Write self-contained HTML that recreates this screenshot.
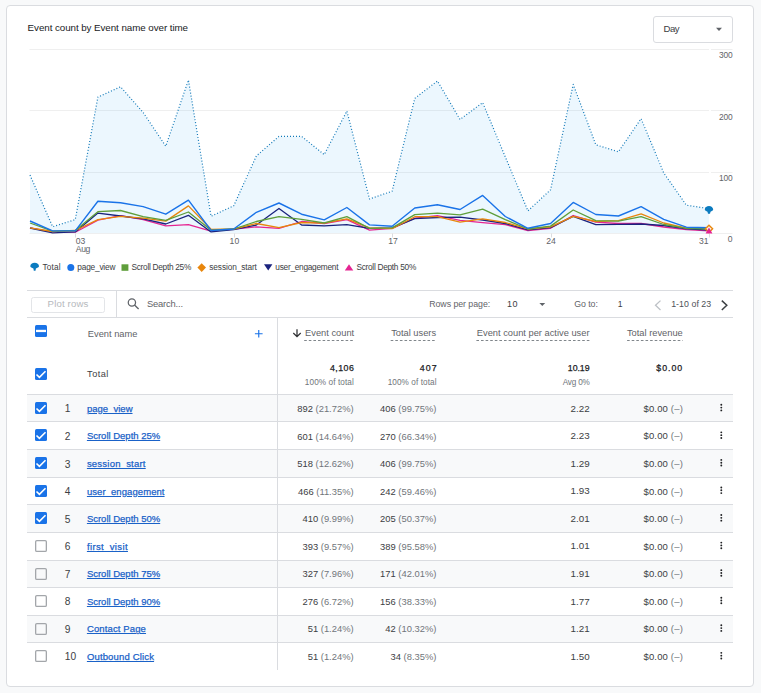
<!DOCTYPE html><html><head><meta charset="utf-8"><style>
html,body{margin:0;padding:0;}
body{width:761px;height:693px;background:#f8f9fa;position:relative;overflow:hidden;font-family:"Liberation Sans", sans-serif;}
.t{position:absolute;white-space:nowrap;}
.card{position:absolute;left:6px;top:5px;width:746px;height:680px;border:1px solid #dadce0;border-radius:4px;background:#fff;}
.abs{position:absolute;}
svg{position:absolute;left:0;top:0;}
</style></head><body>
<div class="card"></div>
<div class="t" style="left:27.60px;top:21.92px;font-size:9.8px;line-height:11.76px;color:#202124;font-weight:normal;letter-spacing:-0.070px;">Event count by Event name over time</div>
<div class="abs" style="left:653px;top:16px;width:78px;height:25px;border:1px solid #dadce0;border-radius:3px;"></div>
<div class="t" style="left:663.60px;top:23.11px;font-size:9.6px;line-height:11.52px;color:#3c4043;font-weight:normal;letter-spacing:-0.536px;">Day</div>
<svg width="761" height="693" style="pointer-events:none"><path d="M716 27.7 L722 27.7 L719 30.9 Z" fill="#606368"/></svg>
<svg width="761" height="693">
<line x1="29.5" y1="49.5" x2="709" y2="49.5" stroke="#efefef" stroke-width="1"/>
<line x1="711" y1="49.5" x2="732.5" y2="49.5" stroke="#efefef" stroke-width="1"/>
<line x1="29.5" y1="110.5" x2="709" y2="110.5" stroke="#efefef" stroke-width="1"/>
<line x1="711" y1="110.5" x2="732.5" y2="110.5" stroke="#efefef" stroke-width="1"/>
<line x1="29.5" y1="172.5" x2="709" y2="172.5" stroke="#efefef" stroke-width="1"/>
<line x1="711" y1="172.5" x2="732.5" y2="172.5" stroke="#efefef" stroke-width="1"/>
<line x1="29.5" y1="233.5" x2="709" y2="233.5" stroke="#eeeff0" stroke-width="1"/>
<line x1="711" y1="233.5" x2="732.5" y2="233.5" stroke="#efefef" stroke-width="1"/>
<polygon points="30,233 30.00,175.1 52.63,226.7 75.27,219.6 97.90,97.1 120.53,86.7 143.17,112.5 165.80,146.2 188.43,80.1 211.07,216.3 233.70,205.8 256.33,156 278.97,136.4 301.60,136.4 324.23,154.6 346.87,111.1 369.50,199 392.13,191.2 414.77,98.4 437.40,81 460.03,119.5 482.67,102.6 505.30,156.9 527.93,210.9 550.57,189.8 573.20,84.4 595.83,144.8 618.47,151.8 641.10,118.7 663.73,172.9 686.37,205.2 709.00,208.6 709,233" fill="rgb(10,150,240)" fill-opacity="0.08"/>
<polyline points="30.00,227.9 52.63,231.9 75.27,232.2 97.90,220.1 120.53,215.7 143.17,219.6 165.80,225.8 188.43,224.7 211.07,231.2 233.70,229.2 256.33,226.9 278.97,228.3 301.60,221.5 324.23,223.5 346.87,219.6 369.50,230.2 392.13,228.3 414.77,218.2 437.40,215.7 460.03,220.4 482.67,222.6 505.30,224.7 527.93,230.5 550.57,228.3 573.20,215.5 595.83,222.1 618.47,223.5 641.10,223.5 663.73,227 686.37,229.6 709.00,230.8" fill="none" stroke="#e52592" stroke-width="1.3" stroke-linejoin="round"/>
<polyline points="30.00,228 52.63,232.9 75.27,231.9 97.90,213.1 120.53,216 143.17,218.9 165.80,224 188.43,215.3 211.07,231.9 233.70,229.5 256.33,225 278.97,208.5 301.60,225 324.23,225.8 346.87,224.7 369.50,228.3 392.13,227.9 414.77,218.6 437.40,217.5 460.03,217.2 482.67,220 505.30,223.5 527.93,229.8 550.57,227.6 573.20,216.3 595.83,224.7 618.47,224.4 641.10,224 663.73,225.5 686.37,228.8 709.00,230.2" fill="none" stroke="#1a237e" stroke-width="1.3" stroke-linejoin="round"/>
<polyline points="30.00,227.9 52.63,231.5 75.27,230.5 97.90,219.6 120.53,216.3 143.17,218.2 165.80,221.1 188.43,205.9 211.07,229.3 233.70,229 256.33,223.5 278.97,227.6 301.60,222.5 324.23,223.2 346.87,218.9 369.50,227.9 392.13,228.7 414.77,216.7 437.40,216.7 460.03,222.1 482.67,218.8 505.30,222.5 527.93,229 550.57,226.9 573.20,216.3 595.83,221.5 618.47,220.6 641.10,213.9 663.73,223 686.37,228.1 709.00,228.4" fill="none" stroke="#e8860c" stroke-width="1.3" stroke-linejoin="round"/>
<polyline points="30.00,223 52.63,231.2 75.27,230.5 97.90,211.7 120.53,210.5 143.17,216.7 165.80,220.4 188.43,212 211.07,230.2 233.70,229 256.33,221.5 278.97,216.7 301.60,219.3 324.23,223 346.87,216.7 369.50,228.3 392.13,227.9 414.77,214.6 437.40,213.1 460.03,214.9 482.67,209.1 505.30,219.6 527.93,229 550.57,226.1 573.20,210 595.83,220.6 618.47,221.1 641.10,216.7 663.73,224.5 686.37,228.4 709.00,229" fill="none" stroke="#5f9e3b" stroke-width="1.3" stroke-linejoin="round"/>
<polyline points="30.00,221 52.63,230.9 75.27,230.9 97.90,201.3 120.53,202.7 143.17,206.6 165.80,214.2 188.43,200.2 211.07,230.5 233.70,229 256.33,212.3 278.97,203 301.60,214.2 324.23,219.9 346.87,207.5 369.50,224.9 392.13,226.3 414.77,208 437.40,204.7 460.03,209.5 482.67,195.4 505.30,216.5 527.93,228.3 550.57,223.5 573.20,202.4 595.83,214.5 618.47,216 641.10,206.7 663.73,219.3 686.37,227.2 709.00,227.7" fill="none" stroke="#1a73e8" stroke-width="1.4" stroke-linejoin="round"/>
<polyline points="30.00,175.1 52.63,226.7 75.27,219.6 97.90,97.1 120.53,86.7 143.17,112.5 165.80,146.2 188.43,80.1 211.07,216.3 233.70,205.8 256.33,156 278.97,136.4 301.60,136.4 324.23,154.6 346.87,111.1 369.50,199 392.13,191.2 414.77,98.4 437.40,81 460.03,119.5 482.67,102.6 505.30,156.9 527.93,210.9 550.57,189.8 573.20,84.4 595.83,144.8 618.47,151.8 641.10,118.7 663.73,172.9 686.37,205.2 709.00,208.6" fill="none" stroke="#1279b8" stroke-width="1.2" stroke-linejoin="round" stroke-dasharray="1 2"/>
<line x1="75.5" y1="233.5" x2="75.5" y2="237.5" stroke="#dadce0" stroke-width="1"/>
<line x1="234.5" y1="233.5" x2="234.5" y2="237.5" stroke="#dadce0" stroke-width="1"/>
<line x1="392.5" y1="233.5" x2="392.5" y2="237.5" stroke="#dadce0" stroke-width="1"/>
<line x1="551.5" y1="233.5" x2="551.5" y2="237.5" stroke="#dadce0" stroke-width="1"/>
<line x1="709.5" y1="233.5" x2="709.5" y2="237.5" stroke="#dadce0" stroke-width="1"/>
<path d="M704.8 209.6 C704.8 207.5 706.8 206 709 206 C711.2 206 713.2 207.5 713.2 209.6 C713.2 210.9 711.7 211.2 710.5 211.8 L710 213.8 L708 213.8 L707.5 211.8 C706.3 211.2 704.8 210.9 704.8 209.6 Z" fill="#0c7bbf"/>
<path d="M709 225.2 L712.6 228.8 L709 232.4 L705.4 228.8 Z" fill="#fdf3e6" stroke="#e8860c" stroke-width="1.4"/>
<path d="M709 227.6 L712.4 233.4 L705.6 233.4 Z" fill="#e52592"/>
</svg>
<div class="t" style="left:332.39px;width:400px;text-align:right;top:50.45px;font-size:8.4px;line-height:10.08px;color:#5f6368;font-weight:normal;letter-spacing:-0.208px;">300</div>
<div class="t" style="left:332.39px;width:400px;text-align:right;top:111.65px;font-size:8.4px;line-height:10.08px;color:#5f6368;font-weight:normal;letter-spacing:-0.208px;">200</div>
<div class="t" style="left:332.39px;width:400px;text-align:right;top:173.45px;font-size:8.4px;line-height:10.08px;color:#5f6368;font-weight:normal;letter-spacing:-0.208px;">100</div>
<div class="t" style="left:332.60px;width:400px;text-align:right;top:234.06px;font-size:8.6px;line-height:10.32px;color:#5f6368;font-weight:normal;">0</div>
<div class="t" style="left:75.80px;top:236.06px;font-size:8.6px;line-height:10.32px;color:#5f6368;font-weight:normal;">03</div>
<div class="t" style="left:75.80px;top:244.06px;font-size:8.6px;line-height:10.32px;color:#5f6368;font-weight:normal;letter-spacing:-0.351px;">Aug</div>
<div class="t" style="left:34.40px;width:400px;text-align:center;top:236.06px;font-size:8.6px;line-height:10.32px;color:#5f6368;font-weight:normal;">10</div>
<div class="t" style="left:193.00px;width:400px;text-align:center;top:236.06px;font-size:8.6px;line-height:10.32px;color:#5f6368;font-weight:normal;">17</div>
<div class="t" style="left:351.00px;width:400px;text-align:center;top:236.06px;font-size:8.6px;line-height:10.32px;color:#5f6368;font-weight:normal;">24</div>
<div class="t" style="left:308.60px;width:400px;text-align:right;top:236.06px;font-size:8.6px;line-height:10.32px;color:#5f6368;font-weight:normal;">31</div>
<svg width="761" height="693">
<path d="M30.3 266.2 C30.3 264 32.2 262.7 34.65 262.7 C37.1 262.7 39 264 39 266.2 C39 267.4 37.3 267.9 35.9 268.4 L35.5 270.7 L33.8 270.7 L33.4 268.4 C32 267.9 30.3 267.4 30.3 266.2 Z" fill="#0c7bbf"/>
<circle cx="70.8" cy="267.6" r="3.5" fill="#1a73e8"/>
<rect x="121.5" y="264.3" width="6.9" height="6.5" fill="#5f9e3b"/>
<path d="M201.7 263.3 L206 267.6 L201.7 271.9 L197.4 267.6 Z" fill="#e8860c"/>
<path d="M264 264.3 L272.4 264.3 L268.2 270.4 Z" fill="#1a237e"/>
<path d="M349 264.3 L353.3 270.6 L344.8 270.6 Z" fill="#e52592"/>
</svg>
<div class="t" style="left:42.50px;top:262.54px;font-size:8.3px;line-height:9.96px;color:#3c4043;font-weight:normal;letter-spacing:0.167px;">Total</div>
<div class="t" style="left:77.30px;top:262.54px;font-size:8.3px;line-height:9.96px;color:#3c4043;font-weight:normal;letter-spacing:-0.198px;">page_view</div>
<div class="t" style="left:131.50px;top:262.54px;font-size:8.3px;line-height:9.96px;color:#3c4043;font-weight:normal;letter-spacing:-0.289px;">Scroll Depth 25%</div>
<div class="t" style="left:209.30px;top:262.54px;font-size:8.3px;line-height:9.96px;color:#3c4043;font-weight:normal;letter-spacing:-0.109px;">session_start</div>
<div class="t" style="left:275.30px;top:262.54px;font-size:8.3px;line-height:9.96px;color:#3c4043;font-weight:normal;letter-spacing:-0.265px;">user_engagement</div>
<div class="t" style="left:356.40px;top:262.54px;font-size:8.3px;line-height:9.96px;color:#3c4043;font-weight:normal;letter-spacing:-0.282px;">Scroll Depth 50%</div>
<svg width="761" height="693">
<line x1="27" y1="290.5" x2="733" y2="290.5" stroke="#dadce0"/>
<line x1="27" y1="317.5" x2="733" y2="317.5" stroke="#dadce0"/>
<line x1="116.5" y1="291" x2="116.5" y2="317" stroke="#dadce0"/>
<rect x="31.5" y="297.5" width="73" height="15" rx="2" fill="none" stroke="#e3e5e8"/>
<circle cx="131.9" cy="302.4" r="3.65" fill="none" stroke="#5f6368" stroke-width="1.25"/>
<line x1="134.5" y1="305" x2="138.6" y2="309" stroke="#5f6368" stroke-width="1.35"/>
<path d="M539.4 303 L545.2 303 L542.3 305.9 Z" fill="#5f6368"/>
<path d="M660.5 300.6 L655.5 305.3 L660.5 310" fill="none" stroke="#bdc1c6" stroke-width="1.3"/>
<path d="M721.8 300.6 L726.8 305.3 L721.8 310" fill="none" stroke="#3c4043" stroke-width="1.5"/>
</svg>
<div class="t" style="left:47.60px;top:298.11px;font-size:9.6px;line-height:11.52px;color:#b6b9bd;font-weight:normal;letter-spacing:0.165px;">Plot rows</div>
<div class="t" style="left:146.90px;top:298.30px;font-size:9.4px;line-height:11.28px;color:#5f6368;font-weight:normal;letter-spacing:-0.177px;">Search...</div>
<div class="t" style="left:429.20px;top:298.97px;font-size:8.8px;line-height:10.56px;color:#5f6368;font-weight:normal;letter-spacing:-0.049px;">Rows per page:</div>
<div class="t" style="left:507.00px;top:298.78px;font-size:9.0px;line-height:10.80px;color:#3c4043;font-weight:normal;letter-spacing:0.489px;">10</div>
<div class="t" style="left:574.20px;top:298.97px;font-size:8.8px;line-height:10.56px;color:#5f6368;font-weight:normal;letter-spacing:-0.054px;">Go to:</div>
<div class="t" style="left:617.80px;top:299.16px;font-size:8.6px;line-height:10.32px;color:#3c4043;font-weight:normal;">1</div>
<div class="t" style="left:671.20px;top:298.97px;font-size:8.8px;line-height:10.56px;color:#4d5156;font-weight:normal;letter-spacing:0.041px;">1-10 of 23</div>
<svg width="761" height="693">
<rect x="27" y="394" width="706" height="27" fill="#f8f9fa"/>
<rect x="27" y="449" width="706" height="28" fill="#f8f9fa"/>
<rect x="27" y="504" width="706" height="28" fill="#f8f9fa"/>
<rect x="27" y="560" width="706" height="27" fill="#f8f9fa"/>
<rect x="27" y="615" width="706" height="27" fill="#f8f9fa"/>
<line x1="27" y1="394.5" x2="733" y2="394.5" stroke="#dadce0"/>
<line x1="27" y1="421.5" x2="733" y2="421.5" stroke="#dadce0"/>
<line x1="27" y1="449.5" x2="733" y2="449.5" stroke="#dadce0"/>
<line x1="27" y1="477.5" x2="733" y2="477.5" stroke="#dadce0"/>
<line x1="27" y1="504.5" x2="733" y2="504.5" stroke="#dadce0"/>
<line x1="27" y1="532.5" x2="733" y2="532.5" stroke="#dadce0"/>
<line x1="27" y1="560.5" x2="733" y2="560.5" stroke="#dadce0"/>
<line x1="27" y1="587.5" x2="733" y2="587.5" stroke="#dadce0"/>
<line x1="27" y1="615.5" x2="733" y2="615.5" stroke="#dadce0"/>
<line x1="27" y1="642.5" x2="733" y2="642.5" stroke="#dadce0"/>
<line x1="277.5" y1="318" x2="277.5" y2="670" stroke="#dadce0"/>
<rect x="35" y="325" width="12" height="12" rx="1.5" fill="#1a73e8"/>
<rect x="36" y="329.8" width="10" height="2.3" fill="#fff"/>
<rect x="35" y="368" width="12" height="12" rx="1.5" fill="#1a73e8"/>
<path d="M36.5 374.5 L39.4 377.3 L45.5 371.2" fill="none" stroke="#fff" stroke-width="1.6"/>
<path d="M258.75 329.9 V337.6 M254.9 333.75 H262.6" stroke="#1a73e8" stroke-width="1.15"/>
<path d="M297 329.3 V336.4 M293.3 333 L297 336.7 L300.7 333" fill="none" stroke="#303134" stroke-width="1.25"/>
<line x1="304.2" y1="340.5" x2="353.5" y2="340.5" stroke="#80868b" stroke-width="1" stroke-dasharray="2.6 2"/>
<line x1="390.7" y1="340.5" x2="436.1" y2="340.5" stroke="#80868b" stroke-width="1" stroke-dasharray="2.6 2"/>
<line x1="476.4" y1="340.5" x2="589.5" y2="340.5" stroke="#80868b" stroke-width="1" stroke-dasharray="2.6 2"/>
<line x1="627.1" y1="340.5" x2="682.8" y2="340.5" stroke="#80868b" stroke-width="1" stroke-dasharray="2.6 2"/>
<rect x="35" y="402" width="12" height="12" rx="1.5" fill="#1a73e8"/>
<path d="M36.5 408.5 L39.4 411.3 L45.5 405.2" fill="none" stroke="#fff" stroke-width="1.6"/>
<circle cx="721.3" cy="404.80" r="0.95" fill="#202124"/>
<circle cx="721.3" cy="407.60" r="0.95" fill="#202124"/>
<circle cx="721.3" cy="410.40" r="0.95" fill="#202124"/>
<rect x="35" y="429" width="12" height="12" rx="1.5" fill="#1a73e8"/>
<path d="M36.5 435.5 L39.4 438.3 L45.5 432.2" fill="none" stroke="#fff" stroke-width="1.6"/>
<circle cx="721.3" cy="432.36" r="0.95" fill="#202124"/>
<circle cx="721.3" cy="435.16" r="0.95" fill="#202124"/>
<circle cx="721.3" cy="437.96" r="0.95" fill="#202124"/>
<rect x="35" y="457" width="12" height="12" rx="1.5" fill="#1a73e8"/>
<path d="M36.5 463.5 L39.4 466.3 L45.5 460.2" fill="none" stroke="#fff" stroke-width="1.6"/>
<circle cx="721.3" cy="459.92" r="0.95" fill="#202124"/>
<circle cx="721.3" cy="462.72" r="0.95" fill="#202124"/>
<circle cx="721.3" cy="465.52" r="0.95" fill="#202124"/>
<rect x="35" y="485" width="12" height="12" rx="1.5" fill="#1a73e8"/>
<path d="M36.5 491.5 L39.4 494.3 L45.5 488.2" fill="none" stroke="#fff" stroke-width="1.6"/>
<circle cx="721.3" cy="487.48" r="0.95" fill="#202124"/>
<circle cx="721.3" cy="490.28" r="0.95" fill="#202124"/>
<circle cx="721.3" cy="493.08" r="0.95" fill="#202124"/>
<rect x="35" y="512" width="12" height="12" rx="1.5" fill="#1a73e8"/>
<path d="M36.5 518.5 L39.4 521.3 L45.5 515.2" fill="none" stroke="#fff" stroke-width="1.6"/>
<circle cx="721.3" cy="515.04" r="0.95" fill="#202124"/>
<circle cx="721.3" cy="517.84" r="0.95" fill="#202124"/>
<circle cx="721.3" cy="520.64" r="0.95" fill="#202124"/>
<rect x="35.65" y="540.65" width="10.7" height="10.7" rx="1.2" fill="none" stroke="#a3a6aa" stroke-width="1.3"/>
<circle cx="721.3" cy="542.60" r="0.95" fill="#202124"/>
<circle cx="721.3" cy="545.40" r="0.95" fill="#202124"/>
<circle cx="721.3" cy="548.20" r="0.95" fill="#202124"/>
<rect x="35.65" y="568.65" width="10.7" height="10.7" rx="1.2" fill="none" stroke="#a3a6aa" stroke-width="1.3"/>
<circle cx="721.3" cy="570.16" r="0.95" fill="#202124"/>
<circle cx="721.3" cy="572.96" r="0.95" fill="#202124"/>
<circle cx="721.3" cy="575.76" r="0.95" fill="#202124"/>
<rect x="35.65" y="595.65" width="10.7" height="10.7" rx="1.2" fill="none" stroke="#a3a6aa" stroke-width="1.3"/>
<circle cx="721.3" cy="597.72" r="0.95" fill="#202124"/>
<circle cx="721.3" cy="600.52" r="0.95" fill="#202124"/>
<circle cx="721.3" cy="603.32" r="0.95" fill="#202124"/>
<rect x="35.65" y="623.65" width="10.7" height="10.7" rx="1.2" fill="none" stroke="#a3a6aa" stroke-width="1.3"/>
<circle cx="721.3" cy="625.28" r="0.95" fill="#202124"/>
<circle cx="721.3" cy="628.08" r="0.95" fill="#202124"/>
<circle cx="721.3" cy="630.88" r="0.95" fill="#202124"/>
<rect x="35.65" y="650.65" width="10.7" height="10.7" rx="1.2" fill="none" stroke="#a3a6aa" stroke-width="1.3"/>
<circle cx="721.3" cy="652.84" r="0.95" fill="#202124"/>
<circle cx="721.3" cy="655.64" r="0.95" fill="#202124"/>
<circle cx="721.3" cy="658.44" r="0.95" fill="#202124"/>
</svg>
<div class="t" style="left:87.80px;top:328.50px;font-size:9.3px;line-height:11.16px;color:#5f6368;font-weight:normal;">Event name</div>
<div class="t" style="left:305.10px;top:327.90px;font-size:9.3px;line-height:11.16px;color:#5f6368;font-weight:normal;">Event count</div>
<div class="t" style="left:36.10px;width:400px;text-align:right;top:327.90px;font-size:9.3px;line-height:11.16px;color:#5f6368;font-weight:normal;">Total users</div>
<div class="t" style="left:189.50px;width:400px;text-align:right;top:327.90px;font-size:9.3px;line-height:11.16px;color:#5f6368;font-weight:normal;">Event count per active user</div>
<div class="t" style="left:282.80px;width:400px;text-align:right;top:327.90px;font-size:9.3px;line-height:11.16px;color:#5f6368;font-weight:normal;">Total revenue</div>
<div class="t" style="left:87.10px;top:368.89px;font-size:9.2px;line-height:11.04px;color:#3c4043;font-weight:normal;letter-spacing:0.467px;">Total</div>
<div class="t" style="left:-45.76px;width:400px;text-align:right;top:362.87px;font-size:8.8px;line-height:10.56px;color:#202124;font-weight:normal;-webkit-text-stroke:0.25px #202124;letter-spacing:0.444px;">4,106</div>
<div class="t" style="left:37.71px;width:400px;text-align:right;top:362.87px;font-size:8.8px;line-height:10.56px;color:#202124;font-weight:normal;-webkit-text-stroke:0.25px #202124;letter-spacing:1.108px;">407</div>
<div class="t" style="left:189.54px;width:400px;text-align:right;top:362.87px;font-size:8.8px;line-height:10.56px;color:#202124;font-weight:normal;-webkit-text-stroke:0.25px #202124;letter-spacing:-0.056px;">10.19</div>
<div class="t" style="left:283.17px;width:400px;text-align:right;top:362.87px;font-size:8.8px;line-height:10.56px;color:#202124;font-weight:normal;-webkit-text-stroke:0.25px #202124;letter-spacing:0.969px;">$0.00</div>
<div class="t" style="left:-46.11px;width:400px;text-align:right;top:377.64px;font-size:8.2px;line-height:9.84px;color:#70757a;font-weight:normal;letter-spacing:0.095px;">100% of total</div>
<div class="t" style="left:36.69px;width:400px;text-align:right;top:377.64px;font-size:8.2px;line-height:9.84px;color:#70757a;font-weight:normal;letter-spacing:0.095px;">100% of total</div>
<div class="t" style="left:189.72px;width:400px;text-align:right;top:377.64px;font-size:8.2px;line-height:9.84px;color:#70757a;font-weight:normal;letter-spacing:-0.182px;">Avg 0%</div>
<div class="t" style="left:64.80px;top:403.45px;font-size:10.2px;line-height:12.24px;color:#3c4043;font-weight:normal;">1</div>
<div class="t" style="left:86.90px;top:402.91px;font-size:9.5px;line-height:11.40px;color:#1a62c8;font-weight:normal;text-decoration:underline;-webkit-text-stroke:0.25px #1a62c8;text-underline-offset:1.2px;letter-spacing:0.022px;">page_view</div>
<div class="t" style="left:-46.40px;width:400px;text-align:right;top:403.00px;font-size:9.4px;line-height:11.28px;color:#3c4043;font-weight:normal;">892 <span style="color:#70757a">(21.72%)</span></div>
<div class="t" style="left:36.40px;width:400px;text-align:right;top:403.00px;font-size:9.4px;line-height:11.28px;color:#3c4043;font-weight:normal;">406 <span style="color:#70757a">(99.75%)</span></div>
<div class="t" style="left:189.60px;width:400px;text-align:right;top:402.62px;font-size:9.8px;line-height:11.76px;color:#3c4043;font-weight:normal;">2.22</div>
<div class="t" style="left:282.96px;width:400px;text-align:right;top:402.91px;font-size:9.5px;line-height:11.40px;color:#3c4043;font-weight:normal;letter-spacing:0.160px;">$0.00 <span style="color:#70757a">(–)</span></div>
<div class="t" style="left:64.80px;top:431.01px;font-size:10.2px;line-height:12.24px;color:#3c4043;font-weight:normal;">2</div>
<div class="t" style="left:86.90px;top:430.47px;font-size:9.5px;line-height:11.40px;color:#1a62c8;font-weight:normal;text-decoration:underline;-webkit-text-stroke:0.25px #1a62c8;text-underline-offset:1.2px;letter-spacing:-0.007px;">Scroll Depth 25%</div>
<div class="t" style="left:-46.40px;width:400px;text-align:right;top:430.56px;font-size:9.4px;line-height:11.28px;color:#3c4043;font-weight:normal;">601 <span style="color:#70757a">(14.64%)</span></div>
<div class="t" style="left:36.40px;width:400px;text-align:right;top:430.56px;font-size:9.4px;line-height:11.28px;color:#3c4043;font-weight:normal;">270 <span style="color:#70757a">(66.34%)</span></div>
<div class="t" style="left:189.60px;width:400px;text-align:right;top:430.18px;font-size:9.8px;line-height:11.76px;color:#3c4043;font-weight:normal;">2.23</div>
<div class="t" style="left:282.96px;width:400px;text-align:right;top:430.47px;font-size:9.5px;line-height:11.40px;color:#3c4043;font-weight:normal;letter-spacing:0.160px;">$0.00 <span style="color:#70757a">(–)</span></div>
<div class="t" style="left:64.80px;top:458.57px;font-size:10.2px;line-height:12.24px;color:#3c4043;font-weight:normal;">3</div>
<div class="t" style="left:86.90px;top:458.03px;font-size:9.5px;line-height:11.40px;color:#1a62c8;font-weight:normal;text-decoration:underline;-webkit-text-stroke:0.25px #1a62c8;text-underline-offset:1.2px;letter-spacing:0.219px;">session_start</div>
<div class="t" style="left:-46.40px;width:400px;text-align:right;top:458.12px;font-size:9.4px;line-height:11.28px;color:#3c4043;font-weight:normal;">518 <span style="color:#70757a">(12.62%)</span></div>
<div class="t" style="left:36.40px;width:400px;text-align:right;top:458.12px;font-size:9.4px;line-height:11.28px;color:#3c4043;font-weight:normal;">406 <span style="color:#70757a">(99.75%)</span></div>
<div class="t" style="left:189.60px;width:400px;text-align:right;top:457.74px;font-size:9.8px;line-height:11.76px;color:#3c4043;font-weight:normal;">1.29</div>
<div class="t" style="left:282.96px;width:400px;text-align:right;top:458.03px;font-size:9.5px;line-height:11.40px;color:#3c4043;font-weight:normal;letter-spacing:0.160px;">$0.00 <span style="color:#70757a">(–)</span></div>
<div class="t" style="left:64.80px;top:486.13px;font-size:10.2px;line-height:12.24px;color:#3c4043;font-weight:normal;">4</div>
<div class="t" style="left:86.90px;top:485.59px;font-size:9.5px;line-height:11.40px;color:#1a62c8;font-weight:normal;text-decoration:underline;-webkit-text-stroke:0.25px #1a62c8;text-underline-offset:1.2px;letter-spacing:0.072px;">user_engagement</div>
<div class="t" style="left:-46.40px;width:400px;text-align:right;top:485.68px;font-size:9.4px;line-height:11.28px;color:#3c4043;font-weight:normal;">466 <span style="color:#70757a">(11.35%)</span></div>
<div class="t" style="left:36.40px;width:400px;text-align:right;top:485.68px;font-size:9.4px;line-height:11.28px;color:#3c4043;font-weight:normal;">242 <span style="color:#70757a">(59.46%)</span></div>
<div class="t" style="left:189.60px;width:400px;text-align:right;top:485.30px;font-size:9.8px;line-height:11.76px;color:#3c4043;font-weight:normal;">1.93</div>
<div class="t" style="left:282.96px;width:400px;text-align:right;top:485.59px;font-size:9.5px;line-height:11.40px;color:#3c4043;font-weight:normal;letter-spacing:0.160px;">$0.00 <span style="color:#70757a">(–)</span></div>
<div class="t" style="left:64.80px;top:513.69px;font-size:10.2px;line-height:12.24px;color:#3c4043;font-weight:normal;">5</div>
<div class="t" style="left:86.90px;top:513.15px;font-size:9.5px;line-height:11.40px;color:#1a62c8;font-weight:normal;text-decoration:underline;-webkit-text-stroke:0.25px #1a62c8;text-underline-offset:1.2px;letter-spacing:-0.007px;">Scroll Depth 50%</div>
<div class="t" style="left:-46.40px;width:400px;text-align:right;top:513.24px;font-size:9.4px;line-height:11.28px;color:#3c4043;font-weight:normal;">410 <span style="color:#70757a">(9.99%)</span></div>
<div class="t" style="left:36.40px;width:400px;text-align:right;top:513.24px;font-size:9.4px;line-height:11.28px;color:#3c4043;font-weight:normal;">205 <span style="color:#70757a">(50.37%)</span></div>
<div class="t" style="left:189.60px;width:400px;text-align:right;top:512.86px;font-size:9.8px;line-height:11.76px;color:#3c4043;font-weight:normal;">2.01</div>
<div class="t" style="left:282.96px;width:400px;text-align:right;top:513.15px;font-size:9.5px;line-height:11.40px;color:#3c4043;font-weight:normal;letter-spacing:0.160px;">$0.00 <span style="color:#70757a">(–)</span></div>
<div class="t" style="left:64.80px;top:541.25px;font-size:10.2px;line-height:12.24px;color:#3c4043;font-weight:normal;">6</div>
<div class="t" style="left:86.90px;top:540.71px;font-size:9.5px;line-height:11.40px;color:#1a62c8;font-weight:normal;text-decoration:underline;-webkit-text-stroke:0.25px #1a62c8;text-underline-offset:1.2px;letter-spacing:0.375px;">first_visit</div>
<div class="t" style="left:-46.40px;width:400px;text-align:right;top:540.80px;font-size:9.4px;line-height:11.28px;color:#3c4043;font-weight:normal;">393 <span style="color:#70757a">(9.57%)</span></div>
<div class="t" style="left:36.40px;width:400px;text-align:right;top:540.80px;font-size:9.4px;line-height:11.28px;color:#3c4043;font-weight:normal;">389 <span style="color:#70757a">(95.58%)</span></div>
<div class="t" style="left:189.60px;width:400px;text-align:right;top:540.42px;font-size:9.8px;line-height:11.76px;color:#3c4043;font-weight:normal;">1.01</div>
<div class="t" style="left:282.96px;width:400px;text-align:right;top:540.71px;font-size:9.5px;line-height:11.40px;color:#3c4043;font-weight:normal;letter-spacing:0.160px;">$0.00 <span style="color:#70757a">(–)</span></div>
<div class="t" style="left:64.80px;top:568.81px;font-size:10.2px;line-height:12.24px;color:#3c4043;font-weight:normal;">7</div>
<div class="t" style="left:86.90px;top:568.27px;font-size:9.5px;line-height:11.40px;color:#1a62c8;font-weight:normal;text-decoration:underline;-webkit-text-stroke:0.25px #1a62c8;text-underline-offset:1.2px;letter-spacing:-0.007px;">Scroll Depth 75%</div>
<div class="t" style="left:-46.40px;width:400px;text-align:right;top:568.36px;font-size:9.4px;line-height:11.28px;color:#3c4043;font-weight:normal;">327 <span style="color:#70757a">(7.96%)</span></div>
<div class="t" style="left:36.40px;width:400px;text-align:right;top:568.36px;font-size:9.4px;line-height:11.28px;color:#3c4043;font-weight:normal;">171 <span style="color:#70757a">(42.01%)</span></div>
<div class="t" style="left:189.60px;width:400px;text-align:right;top:567.98px;font-size:9.8px;line-height:11.76px;color:#3c4043;font-weight:normal;">1.91</div>
<div class="t" style="left:282.96px;width:400px;text-align:right;top:568.27px;font-size:9.5px;line-height:11.40px;color:#3c4043;font-weight:normal;letter-spacing:0.160px;">$0.00 <span style="color:#70757a">(–)</span></div>
<div class="t" style="left:64.80px;top:596.37px;font-size:10.2px;line-height:12.24px;color:#3c4043;font-weight:normal;">8</div>
<div class="t" style="left:86.90px;top:595.83px;font-size:9.5px;line-height:11.40px;color:#1a62c8;font-weight:normal;text-decoration:underline;-webkit-text-stroke:0.25px #1a62c8;text-underline-offset:1.2px;letter-spacing:-0.007px;">Scroll Depth 90%</div>
<div class="t" style="left:-46.40px;width:400px;text-align:right;top:595.92px;font-size:9.4px;line-height:11.28px;color:#3c4043;font-weight:normal;">276 <span style="color:#70757a">(6.72%)</span></div>
<div class="t" style="left:36.40px;width:400px;text-align:right;top:595.92px;font-size:9.4px;line-height:11.28px;color:#3c4043;font-weight:normal;">156 <span style="color:#70757a">(38.33%)</span></div>
<div class="t" style="left:189.60px;width:400px;text-align:right;top:595.54px;font-size:9.8px;line-height:11.76px;color:#3c4043;font-weight:normal;">1.77</div>
<div class="t" style="left:282.96px;width:400px;text-align:right;top:595.83px;font-size:9.5px;line-height:11.40px;color:#3c4043;font-weight:normal;letter-spacing:0.160px;">$0.00 <span style="color:#70757a">(–)</span></div>
<div class="t" style="left:64.80px;top:623.93px;font-size:10.2px;line-height:12.24px;color:#3c4043;font-weight:normal;">9</div>
<div class="t" style="left:86.90px;top:623.39px;font-size:9.5px;line-height:11.40px;color:#1a62c8;font-weight:normal;text-decoration:underline;-webkit-text-stroke:0.25px #1a62c8;text-underline-offset:1.2px;letter-spacing:0.130px;">Contact Page</div>
<div class="t" style="left:-46.40px;width:400px;text-align:right;top:623.48px;font-size:9.4px;line-height:11.28px;color:#3c4043;font-weight:normal;">51 <span style="color:#70757a">(1.24%)</span></div>
<div class="t" style="left:36.40px;width:400px;text-align:right;top:623.48px;font-size:9.4px;line-height:11.28px;color:#3c4043;font-weight:normal;">42 <span style="color:#70757a">(10.32%)</span></div>
<div class="t" style="left:189.60px;width:400px;text-align:right;top:623.10px;font-size:9.8px;line-height:11.76px;color:#3c4043;font-weight:normal;">1.21</div>
<div class="t" style="left:282.96px;width:400px;text-align:right;top:623.39px;font-size:9.5px;line-height:11.40px;color:#3c4043;font-weight:normal;letter-spacing:0.160px;">$0.00 <span style="color:#70757a">(–)</span></div>
<div class="t" style="left:64.80px;top:651.49px;font-size:10.2px;line-height:12.24px;color:#3c4043;font-weight:normal;">10</div>
<div class="t" style="left:86.90px;top:650.95px;font-size:9.5px;line-height:11.40px;color:#1a62c8;font-weight:normal;text-decoration:underline;-webkit-text-stroke:0.25px #1a62c8;text-underline-offset:1.2px;letter-spacing:0.158px;">Outbound Click</div>
<div class="t" style="left:-46.40px;width:400px;text-align:right;top:651.04px;font-size:9.4px;line-height:11.28px;color:#3c4043;font-weight:normal;">51 <span style="color:#70757a">(1.24%)</span></div>
<div class="t" style="left:36.40px;width:400px;text-align:right;top:651.04px;font-size:9.4px;line-height:11.28px;color:#3c4043;font-weight:normal;">34 <span style="color:#70757a">(8.35%)</span></div>
<div class="t" style="left:189.60px;width:400px;text-align:right;top:650.66px;font-size:9.8px;line-height:11.76px;color:#3c4043;font-weight:normal;">1.50</div>
<div class="t" style="left:282.96px;width:400px;text-align:right;top:650.95px;font-size:9.5px;line-height:11.40px;color:#3c4043;font-weight:normal;letter-spacing:0.160px;">$0.00 <span style="color:#70757a">(–)</span></div>
</body></html>
